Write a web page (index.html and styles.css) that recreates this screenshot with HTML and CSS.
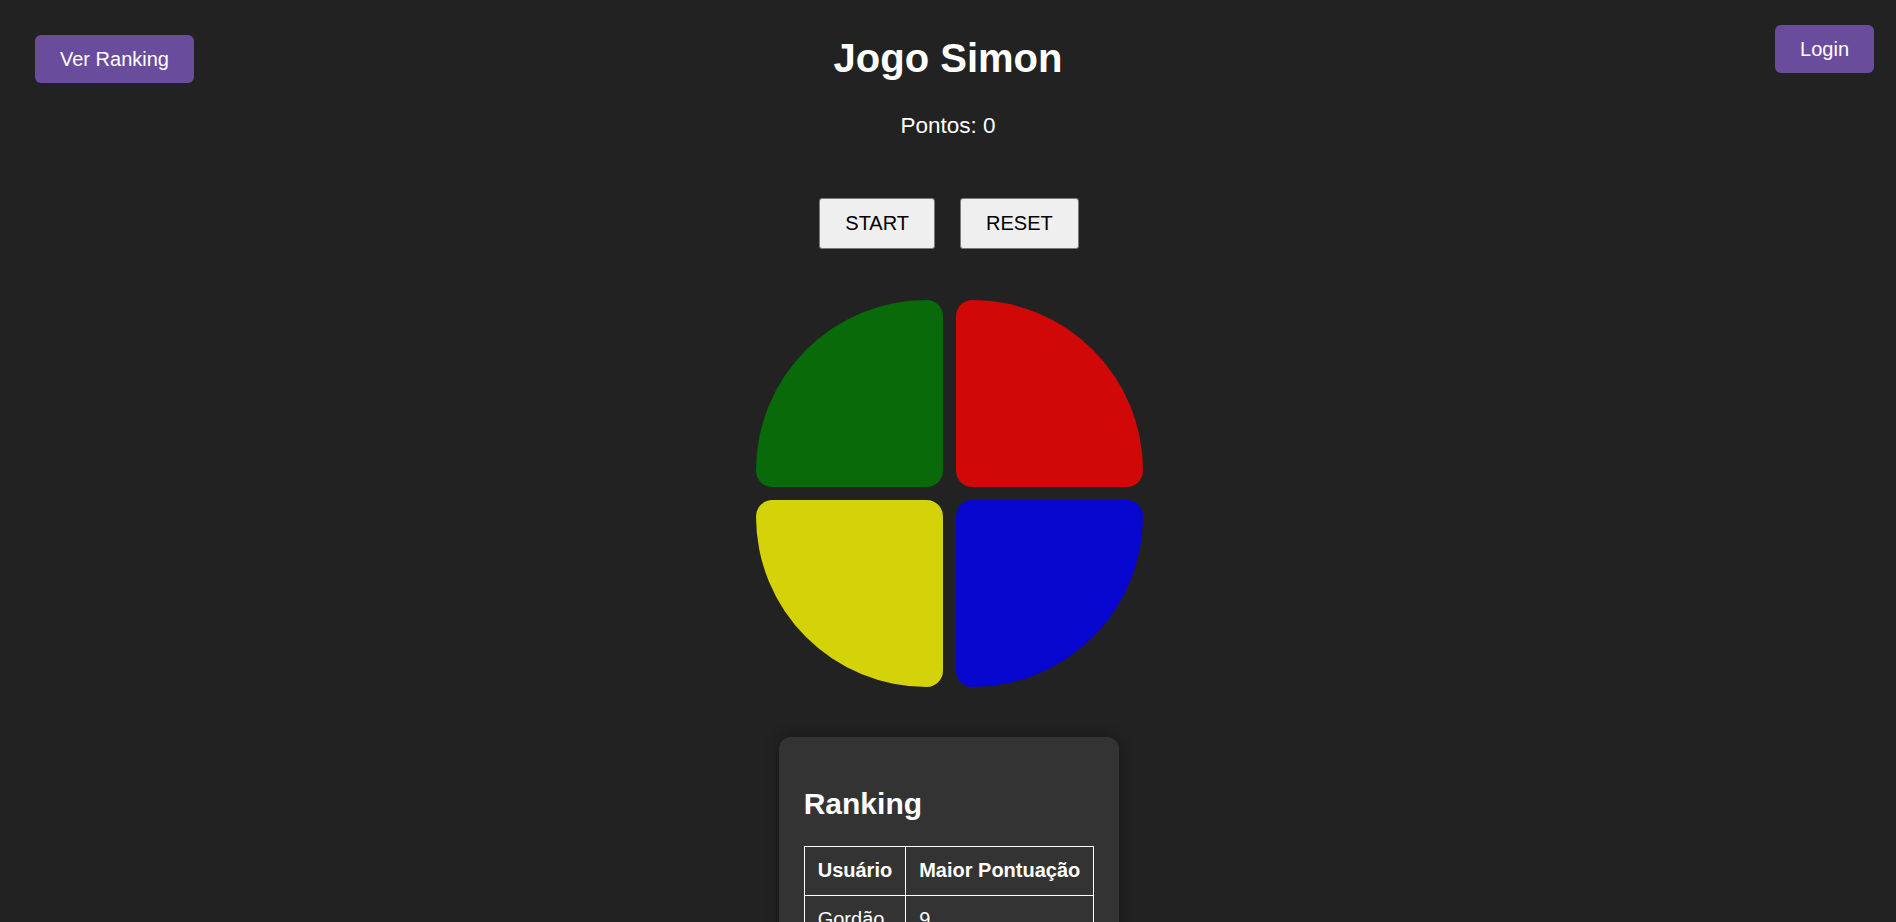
FILE: index.html
```html
<!DOCTYPE html>
<html lang="pt-BR">
<head>
<meta charset="utf-8">
<title>Jogo Simon</title>
<link rel="stylesheet" href="styles.css">
</head>
<body>
  <header class="topbar">
    <div class="top-left"><button class="btn-purple btn-ranking">Ver Ranking</button></div>
    <h1 class="title">Jogo Simon</h1>
    <div class="top-right"><button class="btn-purple btn-login">Login</button></div>
  </header>
  <p class="score">Pontos: 0</p>
  <div class="controls">
    <button class="btn-ctrl">START</button>
    <button class="btn-ctrl">RESET</button>
  </div>
  <div class="board">
    <div class="pad pad-green"></div>
    <div class="pad pad-red"></div>
    <div class="pad pad-yellow"></div>
    <div class="pad pad-blue"></div>
  </div>
  <section class="ranking-card">
    <h2 class="ranking-title">Ranking</h2>
    <table class="ranking-table">
      <thead>
        <tr><th>Usuário</th><th>Maior Pontuação</th></tr>
      </thead>
      <tbody>
        <tr><td>Gordão</td><td>9</td></tr>
      </tbody>
    </table>
  </section>
</body>
</html>
```
FILE: styles.css
```css
html, body {
  margin: 0;
  padding: 0;
}
body {
  background: #222222;
  color: #ffffff;
  font-family: "Liberation Sans", Arial, sans-serif;
  font-size: 20px;
  text-align: center;
  padding-bottom: 60px;
}
button {
  font-family: "Liberation Sans", Arial, sans-serif;
  font-size: 20px;
  line-height: 23px;
  cursor: pointer;
}
.topbar {
  display: grid;
  grid-template-columns: 1fr auto 1fr;
  align-items: start;
  padding-top: 25px;
}
.top-left {
  justify-self: start;
  padding-left: 35px;
  padding-top: 10px;
}
.top-right {
  justify-self: end;
  padding-right: 22px;
}
.btn-purple {
  background: #6a4c9c;
  color: #ffffff;
  border: none;
  border-radius: 6px;
  padding: 12.5px 25px;
  display: block;
}
.title {
  margin: 10px 0 0;
  font-size: 40px;
  line-height: 46px;
  font-weight: bold;
}
.score {
  margin: 29.5px 0 0;
  font-size: 22.5px;
  line-height: 26px;
}
.controls {
  display: flex;
  justify-content: center;
  gap: 25px;
  margin-top: 59px;
  padding-left: 2px;
}
.btn-ctrl {
  background: #efefef;
  color: #000000;
  border: 1px solid #7a7a7a;
  border-radius: 3px;
  padding: 13px 25px;
}
.board {
  display: grid;
  grid-template-columns: 187px 187px;
  grid-template-rows: 187px 187px;
  gap: 13px;
  justify-content: center;
  margin-top: 51px;
  padding-left: 2px;
}
.pad {
  border-radius: 18px;
}
.pad-green {
  background: #086a08;
  border-top-left-radius: 100%;
}
.pad-red {
  background: #d10808;
  border-top-right-radius: 100%;
}
.pad-yellow {
  background: #d4d208;
  border-bottom-left-radius: 100%;
}
.pad-blue {
  background: #0707d0;
  border-bottom-right-radius: 100%;
}
.ranking-card {
  width: fit-content;
  margin: 50px auto 0;
  background: #333333;
  border-radius: 12px;
  padding: 25px;
  text-align: left;
  box-shadow: 0 0 14px rgba(0, 0, 0, 0.35);
  position: relative;
  left: 1px;
}
.ranking-title {
  margin: 25px 0;
  font-size: 30px;
  line-height: 34px;
  font-weight: bold;
}
.ranking-table {
  border-collapse: collapse;
  font-size: 20px;
  line-height: 23px;
}
.ranking-table th,
.ranking-table td {
  border: 1px solid #ffffff;
  padding: 12.5px 13px;
  text-align: left;
}
.ranking-table th {
  font-weight: bold;
}
```
